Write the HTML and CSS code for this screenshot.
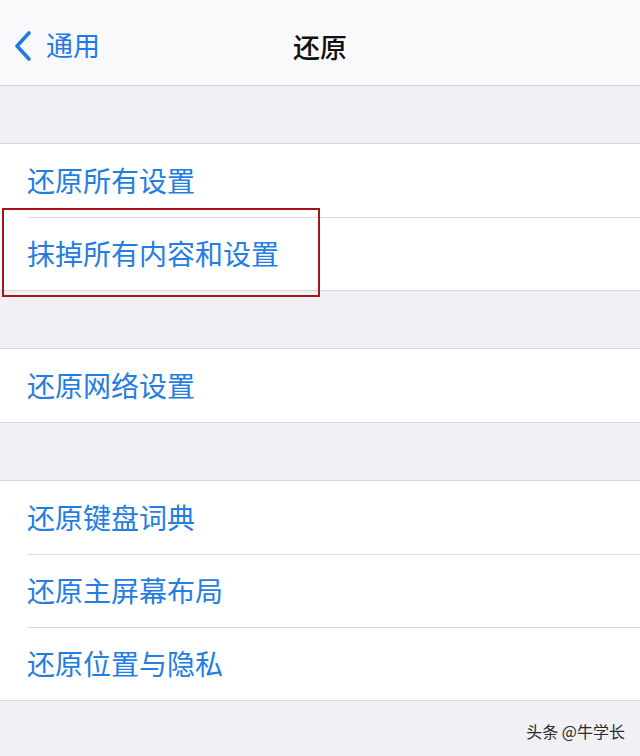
FILE: index.html
```html
<!DOCTYPE html>
<html lang="zh-CN">
<head>
<meta charset="utf-8">
<link rel="stylesheet" href="styles.css">
</head>
<body>
<div class="screen">
  <header class="nav">
    <div class="back">
      <svg class="chev" width="20" height="30" viewBox="0 0 20 30"><path d="M16 2 L4 15 L16 28" fill="none" stroke="#1f7ae8" stroke-width="3.6" stroke-linecap="round" stroke-linejoin="round"/></svg>
      <span class="back-label">通用</span>
    </div>
    <div class="title">还原</div>
  </header>
  <div class="gap"></div>
  <section class="group">
    <div class="row"><span>还原所有设置</span></div>
    <div class="row highlight"><span>抹掉所有内容和设置</span><div class="mark"></div></div>
  </section>
  <div class="gap"></div>
  <section class="group">
    <div class="row"><span>还原网络设置</span></div>
  </section>
  <div class="gap"></div>
  <section class="group">
    <div class="row"><span>还原键盘词典</span></div>
    <div class="row"><span>还原主屏幕布局</span></div>
    <div class="row"><span>还原位置与隐私</span></div>
  </section>
  <footer class="footer"><span class="wm">头条 @牛学长</span></footer>
</div>
</body>
</html>
```

FILE: styles.css
```css
html, body {
  margin: 0;
  padding: 0;
  background: #f0f0f5;
}
.screen {
  width: 640px;
  height: 756px;
  overflow: hidden;
  display: flex;
  flex-direction: column;
  font-family: "Noto Sans CJK SC", "Noto Sans", sans-serif;
  background: #f0f0f5;
}
.nav {
  position: relative;
  height: 85px;
  flex: none;
  background: #f9f9fb;
  border-bottom: 1px solid #d4d4d8;
  display: flex;
  align-items: center;
}
.back {
  display: flex;
  align-items: center;
  padding-left: 13px;
  gap: 13px;
  color: #1f7ae8;
  font-size: 27px;
  margin-top: 6px;
}
.chev { display: block; margin-top: 1px; }
.back-label { line-height: 1; margin-top: -2px; }
.title {
  position: absolute;
  left: 0;
  right: 0;
  top: 0;
  bottom: 0;
  display: flex;
  align-items: center;
  justify-content: center;
  font-size: 27px;
  font-weight: 500;
  color: #111;
  padding-top: 8px;
}
.gap {
  height: 57px;
  flex: none;
}
.group {
  background: #fff;
  border-top: 1px solid #d8d8dc;
  border-bottom: 1px solid #d8d8dc;
  flex: none;
}
.row {
  position: relative;
  height: 73px;
  display: flex;
  align-items: center;
  padding-left: 27px;
  color: #237de3;
  font-size: 28px;
}
.row span { margin-top: -2px; }
.row + .row::before {
  content: "";
  position: absolute;
  left: 27px;
  right: 0;
  top: 0;
  height: 1px;
  background: #dcdce0;
}
.mark {
  position: absolute;
  left: 2px;
  top: -9px;
  width: 314px;
  height: 85px;
  border: 2px solid #a8141c;
}
.footer {
  flex: 1;
  display: flex;
  justify-content: flex-end;
  align-items: center;
  padding-right: 15px;
}
.wm {
  font-size: 16px;
  color: #2a2a2a;
  margin-top: 4px;
}
```
